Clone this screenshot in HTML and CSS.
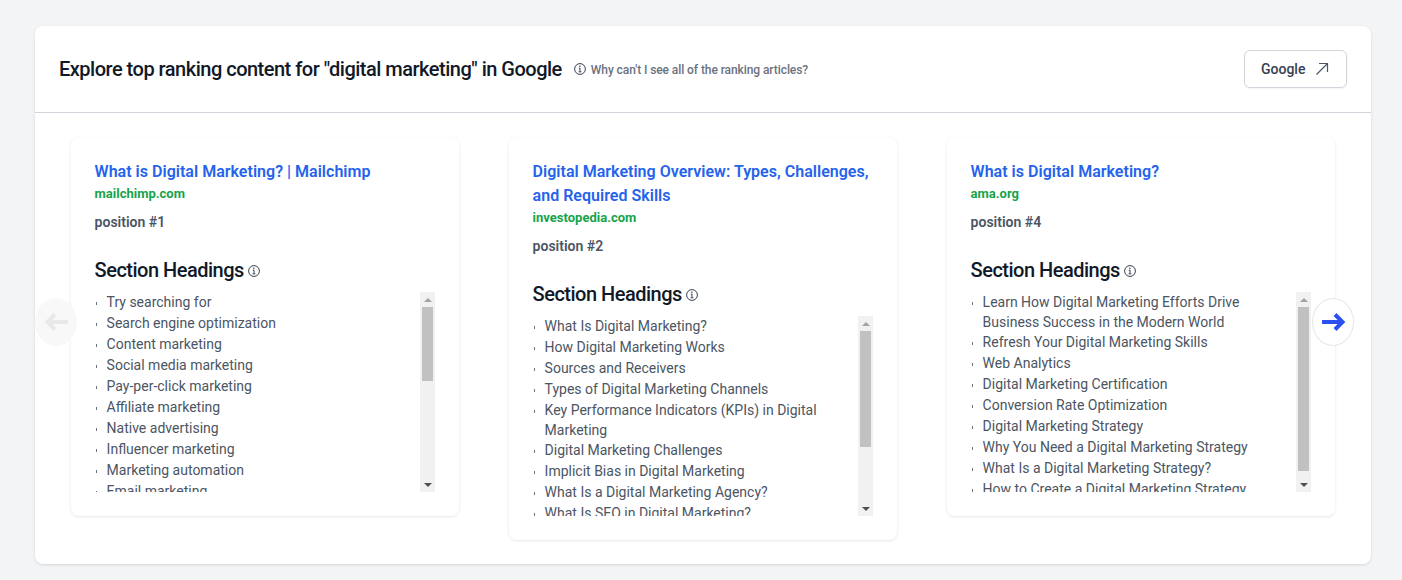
FILE: index.html
```html
<!DOCTYPE html>
<html lang="en">
<head>
    <meta charset="UTF-8">
    <meta name="viewport" content="width=device-width, initial-scale=1.0">
    <title>Top ranking content</title>
    <link rel="stylesheet" href="styles.css">
</head>
<body>
    <section class="panel">
        <header class="panel-header">
            <h1>Explore top ranking content for "digital marketing" in Google</h1>
            <div class="hint">
                <svg class="info" viewBox="0 0 12 12"><circle cx="6" cy="6" r="5.4"/><path d="M6 5.2v3.4M4.600 8.800h2.800M4.800 5.200h1.400"/><circle class="dot" cx="5.900" cy="3.300" r=".8"/></svg>
                <span>Why can't I see all of the ranking articles?</span>
            </div>
            <a class="google-btn" href="#">
                Google
                <svg viewBox="0 0 14 14"><path d="M1.500 12.500L12.500 1.500M4 1.500h8.500V10"/></svg>
            </a>
        </header>

        <div class="slider">
            <button class="arrow arrow-left">
                <svg viewBox="0 0 24 22"><path d="M24 11H4M11 3.500L3.500 11l7.500 7.500"/></svg>
            </button>

            <article class="card">
                <a class="card-title" href="#">What is Digital Marketing? | Mailchimp</a>
                <div class="domain">mailchimp.com</div>
                <div class="position">position #1</div>
                <h2>Section Headings <svg class="info" viewBox="0 0 12 12"><circle cx="6" cy="6" r="5.400"/><path d="M6 5.200v3.400M4.600 8.800h2.800M4.800 5.200h1.400"/><circle class="dot" cx="5.900" cy="3.300" r=".8"/></svg></h2>
                <div class="headings-box">
                    <ul class="headings">
                        <li>Try searching for</li>
                        <li>Search engine optimization</li>
                        <li>Content marketing</li>
                        <li>Social media marketing</li>
                        <li>Pay-per-click marketing</li>
                        <li>Affiliate marketing</li>
                        <li>Native advertising</li>
                        <li>Influencer marketing</li>
                        <li>Marketing automation</li>
                        <li>Email marketing</li>
                    </ul>
                    <div class="scrollbar">
                        <span class="scroll-btn scroll-up"></span>
                        <div class="scroll-track"><div class="scroll-thumb" style="height: 74px"></div></div>
                        <span class="scroll-btn scroll-down"></span>
                    </div>
                </div>
            </article>

            <article class="card">
                <a class="card-title" href="#">Digital Marketing Overview: Types, Challenges, and Required Skills</a>
                <div class="domain">investopedia.com</div>
                <div class="position">position #2</div>
                <h2>Section Headings <svg class="info" viewBox="0 0 12 12"><circle cx="6" cy="6" r="5.400"/><path d="M6 5.200v3.400M4.600 8.800h2.800M4.800 5.200h1.400"/><circle class="dot" cx="5.900" cy="3.300" r=".8"/></svg></h2>
                <div class="headings-box">
                    <ul class="headings">
                        <li>What Is Digital Marketing?</li>
                        <li>How Digital Marketing Works</li>
                        <li>Sources and Receivers</li>
                        <li>Types of Digital Marketing Channels</li>
                        <li>Key Performance Indicators (KPIs) in Digital Marketing</li>
                        <li>Digital Marketing Challenges</li>
                        <li>Implicit Bias in Digital Marketing</li>
                        <li>What Is a Digital Marketing Agency?</li>
                        <li>What Is SEO in Digital Marketing?</li>
                    </ul>
                    <div class="scrollbar">
                        <span class="scroll-btn scroll-up"></span>
                        <div class="scroll-track"><div class="scroll-thumb" style="height: 116px"></div></div>
                        <span class="scroll-btn scroll-down"></span>
                    </div>
                </div>
            </article>

            <article class="card">
                <a class="card-title" href="#">What is Digital Marketing?</a>
                <div class="domain">ama.org</div>
                <div class="position">position #4</div>
                <h2>Section Headings <svg class="info" viewBox="0 0 12 12"><circle cx="6" cy="6" r="5.400"/><path d="M6 5.200v3.400M4.600 8.800h2.800M4.800 5.200h1.400"/><circle class="dot" cx="5.900" cy="3.300" r=".8"/></svg></h2>
                <div class="headings-box">
                    <ul class="headings">
                        <li>Learn How Digital Marketing Efforts Drive Business Success in the Modern World</li>
                        <li>Refresh Your Digital Marketing Skills</li>
                        <li>Web Analytics</li>
                        <li>Digital Marketing Certification</li>
                        <li>Conversion Rate Optimization</li>
                        <li>Digital Marketing Strategy</li>
                        <li>Why You Need a Digital Marketing Strategy</li>
                        <li>What Is a Digital Marketing Strategy?</li>
                        <li>How to Create a Digital Marketing Strategy</li>
                    </ul>
                    <div class="scrollbar">
                        <span class="scroll-btn scroll-up"></span>
                        <div class="scroll-track"><div class="scroll-thumb" style="height: 164px"></div></div>
                        <span class="scroll-btn scroll-down"></span>
                    </div>
                </div>
            </article>

            <button class="arrow arrow-right">
                <svg viewBox="0 0 24 22"><path d="M1 11h20M14 3.500l7.500 7.500-7.500 7.500"/></svg>
            </button>
        </div>
    </section>
</body>
</html>
```

FILE: styles.css
```css
/* Page */
body {
    font-family: Roboto, Arial, sans-serif;
    margin: 0;
    padding: 26px 31px 16px 35px;
    background-color: #f3f4f6;
    color: #111827;
}

.panel {
    background-color: #fff;
    border-radius: 8px;
    box-shadow: 0 1px 3px rgba(0, 0, 0, 0.12);
    height: 538px;
}

/* Header row */
.panel-header {
    display: flex;
    align-items: center;
    height: 86px;
    padding: 0 24px;
    border-bottom: 1px solid #d1d5db;
}

h1 {
    font-size: 20px;
    font-weight: 500;
    line-height: 28px;
    letter-spacing: -0.5px;
    margin: 0;
}

.hint {
    display: flex;
    align-items: center;
    margin-left: 12px;
    font-size: 12px;
    font-weight: 500;
    letter-spacing: -0.08px;
    color: #6b7280;
}

.hint .info {
    margin-right: 5px;
}

.hint span {
    margin-top: 1px;
}

.info {
    width: 12px;
    height: 12px;
    fill: none;
    stroke: #374151;
    stroke-width: 1;
}

.info .dot {
    fill: #374151;
    stroke: none;
}

.google-btn {
    display: flex;
    align-items: center;
    justify-content: space-between;
    box-sizing: border-box;
    width: 103px;
    height: 38px;
    margin-left: auto;
    padding: 0 17px 0 16px;
    border: 1px solid #d1d5db;
    border-radius: 6px;
    box-shadow: 0 1px 2px rgba(0, 0, 0, 0.05);
    color: #374151;
    font-size: 14px;
    font-weight: 500;
    text-decoration: none;
}

.google-btn svg {
    width: 14px;
    height: 14px;
    fill: none;
    stroke: #4b5563;
    stroke-width: 1.2;
}

/* Cards */
.slider {
    position: relative;
    display: flex;
    align-items: flex-start;
    gap: 50px;
    padding: 24px 36px 0;
}

.card {
    box-sizing: border-box;
    width: 388px;
    flex-shrink: 0;
    padding: 23px 24px 24px 23.6px;
    background-color: #fff;
    border-radius: 8px;
    box-shadow: 0 1px 3px rgba(0, 0, 0, 0.1);
}

.card-title {
    display: block;
    color: #2563eb;
    font-size: 16px;
    font-weight: 600;
    line-height: 24px;
    letter-spacing: 0.02px;
    text-decoration: none;
}

.domain {
    color: #16a34a;
    font-size: 13px;
    font-weight: 700;
    line-height: 20px;
}

.position {
    margin-top: 8px;
    color: #4b5563;
    font-size: 14px;
    font-weight: 600;
    line-height: 20px;
}

h2 {
    display: flex;
    align-items: center;
    gap: 4px;
    margin: 24px 0 8px;
    font-size: 20px;
    font-weight: 500;
    line-height: 28px;
    letter-spacing: -0.5px;
}

h2 .info {
    margin-top: 2px;
}

/* Heading list with its scrollbar */
.headings-box {
    display: flex;
    height: 200px;
}

.headings {
    flex: 1;
    margin: 0;
    padding: 0 0 0 12px;
    overflow: hidden;
    list-style: none;
    color: #4b5563;
    font-size: 14px;
    line-height: 20px;
}

.headings li {
    min-height: 21px;
}

.headings li::before {
    content: "";
    display: inline-block;
    width: 1px;
    height: 3px;
    margin: 0 10px 0 -11px;
    vertical-align: 2px;
    background-color: #6b7280;
}

.scrollbar {
    display: flex;
    flex-direction: column;
    width: 15px;
    background-color: #f1f1f1;
}

.scroll-btn {
    display: flex;
    align-items: center;
    justify-content: center;
    height: 15px;
}

.scroll-btn::after {
    content: "";
    border-left: 4px solid transparent;
    border-right: 4px solid transparent;
}

.scroll-up::after {
    border-bottom: 4px solid #a3a3a3;
}

.scroll-down::after {
    border-top: 4px solid #505050;
}

.scroll-track {
    flex: 1;
}

.scroll-thumb {
    margin: 0 2px;
    background-color: #c1c1c1;
}

/* Slider arrows */
.arrow {
    position: absolute;
    top: 185px;
    width: 42px;
    height: 48px;
    padding: 0;
    border-radius: 50%;
    display: flex;
    align-items: center;
    justify-content: center;
    cursor: pointer;
}

.arrow svg {
    width: 26px;
    height: 22px;
    fill: none;
    stroke-width: 4;
}

.arrow-left {
    left: 0;
    border: none;
    background-color: #f8f8f8;
}

.arrow-left svg {
    stroke: #e8e8e8;
}

.arrow-right {
    right: 17px;
    border: 1px solid #e5e7eb;
    background-color: #fff;
}

.arrow-right svg {
    stroke: #2b50f0;
}
```
